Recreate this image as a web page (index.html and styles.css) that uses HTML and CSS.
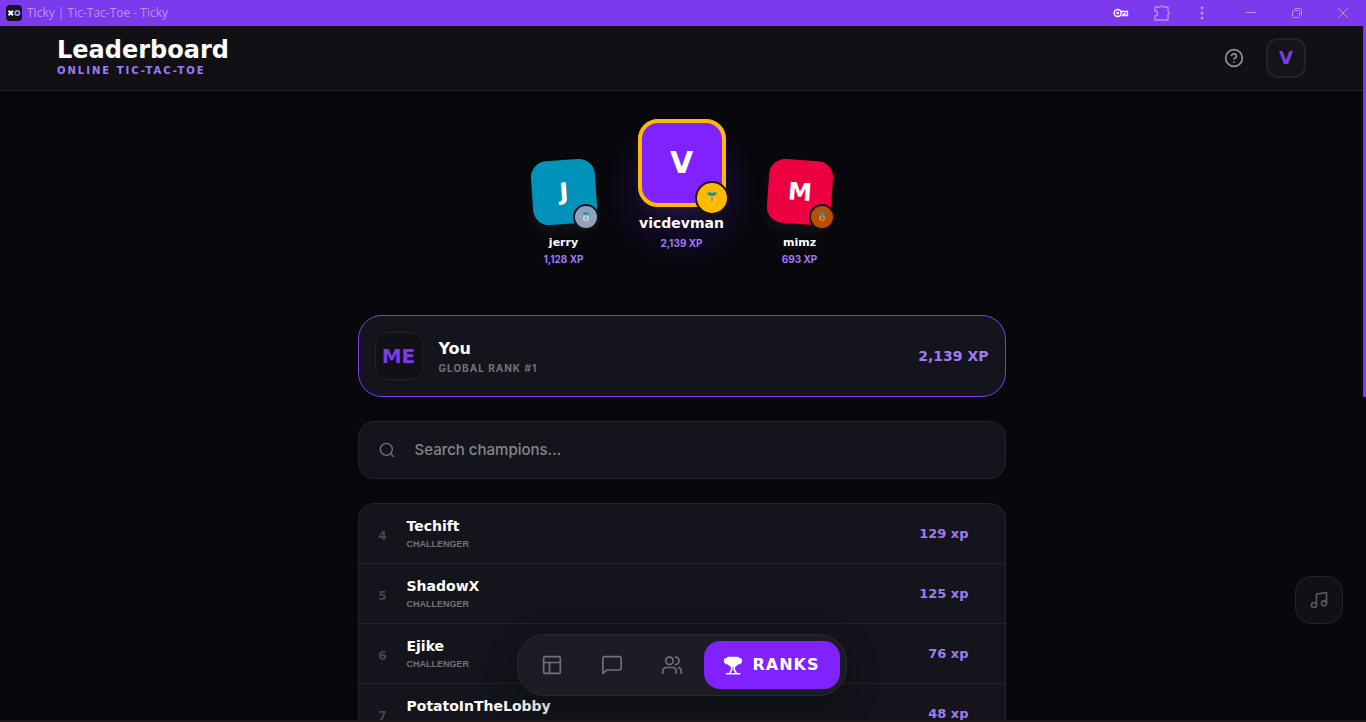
FILE: index.html
```html
<!DOCTYPE html>
<html lang="en">
<head>
<meta charset="utf-8">
<title>Ticky | Tic-Tac-Toe - Ticky</title>
<link rel="stylesheet" href="styles.css">
</head>
<body>
<div class="titlebar">
  <svg class="app-icon" viewBox="0 0 16 16"><rect width="16" height="16" rx="4" fill="#12131c"/><path d="M2.500 5.700l4.500 4.600M7 5.700l-4.500 4.600" stroke="#fff" stroke-width="2"/><circle cx="11.300" cy="8" r="2.200" fill="none" stroke="#a78bfa" stroke-width="1.800"/></svg>
  <span class="window-title">Ticky | Tic-Tac-Toe - Ticky</span>
  <div class="window-tools">
    <button class="tool" aria-label="Passwords"><svg class="key" viewBox="0 0 16 18"><circle cx="4.700" cy="9" r="3.500" fill="none" stroke="#fff" stroke-width="1.400"/><circle cx="4.700" cy="9" r="1.300" fill="#fff"/><path d="M8 7.500h6.500v4h-2.500v-1.700h-1.500v1.700h-2" fill="none" stroke="#fff" stroke-width="1.300"/></svg></button>
    <button class="tool" aria-label="Extensions"><svg viewBox="0 0 18 18"><path d="M3 3h4.200a1.700 1.700 0 0 1 3.200 0H15v4.300a1.700 1.700 0 0 1 0 3.200V16H2v-4a2.500 2.500 0 0 0 0-5V3z" fill="none" stroke="currentColor" stroke-width="1.300" stroke-linejoin="round"/></svg></button>
    <button class="tool" aria-label="Menu"><svg viewBox="0 0 18 18" fill="currentColor"><circle cx="9" cy="4" r="1.500"/><circle cx="9" cy="9" r="1.500"/><circle cx="9" cy="14" r="1.500"/></svg></button>
  </div>
  <div class="window-controls">
    <button class="tool" aria-label="Minimize"><svg viewBox="0 0 18 18"><path d="M4 8.500h10" stroke="currentColor"/></svg></button>
    <button class="tool" aria-label="Restore"><svg viewBox="0 0 18 18" fill="none" stroke="currentColor"><rect x="4.500" y="6.500" width="7" height="7" rx="1"/><path d="M6.500 4.500h5a2 2 0 0 1 2 2v5"/></svg></button>
    <button class="tool" aria-label="Close"><svg viewBox="0 0 18 18"><path d="M4 4l10 10M14 4L4 14" stroke="currentColor"/></svg></button>
  </div>
</div>
<div class="viewport">
  <header class="header">
    <div>
      <h1 class="title">Leaderboard</h1>
      <p class="subtitle">ONLINE TIC-TAC-TOE</p>
    </div>
    <div class="header-actions">
      <button class="help" aria-label="Help"><svg class="icon20" viewBox="0 0 24 24"><circle cx="12" cy="12" r="10"/><path d="M9.090 9a3 3 0 0 1 5.830 1c0 2-3 3-3 3M12 17h.010"/></svg></button>
      <button class="profile">V</button>
    </div>
  </header>
  <main class="main">
    <section class="podium">
      <div class="place">
        <div class="avatar-wrap">
          <div class="avatar teal">J</div>
          <span class="badge silver"><svg viewBox="0 0 14 14"><path d="M3 2l2.500-1L7 2.500 8.500 1 11 2 8.500 5h-3z" fill="#1199cf"/><circle cx="7" cy="8.500" r="3.500" fill="#cfd3d7"/><path d="M6 7.200h1.800v1.300H6v1.500h2" fill="none" stroke="#858d98"/></svg></span>
        </div>
        <div class="name">jerry</div>
        <div class="points">1,128 XP</div>
      </div>
      <div class="place first">
        <div class="avatar-wrap">
          <div class="avatar champion">V</div>
          <span class="badge gold"><svg viewBox="0 0 14 14"><path d="M1.500 2l4-1L7 2.200 8.500 1l4 1-3 3h-5z" fill="#1199b4"/><circle cx="7" cy="8.500" r="3.500" fill="#ffc02a"/><path d="M7 6.300v4" stroke="#9c6410" stroke-width="1.200"/></svg></span>
        </div>
        <div class="name">vicdevman</div>
        <div class="points">2,139 XP</div>
      </div>
      <div class="place third">
        <div class="avatar-wrap">
          <div class="avatar red">M</div>
          <span class="badge bronze"><svg viewBox="0 0 14 14"><path d="M3 2l2.500-1L7 2.500 8.500 1 11 2 8.500 5h-3z" fill="#1199cf"/><circle cx="7" cy="8.500" r="3.500" fill="#d98c2c"/><path d="M6 7h2L7 8.500h1V10H6" fill="none" stroke="#85450c"/></svg></span>
        </div>
        <div class="name">mimz</div>
        <div class="points">693 XP</div>
      </div>
    </section>
    <section class="me-card">
      <div class="me-avatar">ME</div>
      <div class="me-info">
        <h2 class="me-name">You</h2>
        <p class="me-rank">GLOBAL RANK #1</p>
      </div>
      <strong class="me-xp">2,139 XP</strong>
    </section>
    <label class="search">
      <svg class="icon16" viewBox="0 0 24 24"><circle cx="11" cy="11" r="9"/><path d="M22 22l-4.600-4.600"/></svg>
      <input class="search-input" type="text" placeholder="Search champions..." aria-label="Search champions">
    </label>
    <ol class="ranking">
      <li class="row"><span class="rank">4</span><div class="who"><h3 class="player">Techift</h3><p class="tier">CHALLENGER</p></div><span class="xp">129 xp</span></li>
      <li class="row"><span class="rank">5</span><div class="who"><h3 class="player">ShadowX</h3><p class="tier">CHALLENGER</p></div><span class="xp">125 xp</span></li>
      <li class="row"><span class="rank">6</span><div class="who"><h3 class="player">Ejike</h3><p class="tier">CHALLENGER</p></div><span class="xp">76 xp</span></li>
      <li class="row"><span class="rank">7</span><div class="who"><h3 class="player">PotatoInTheLobby</h3><p class="tier">CHALLENGER</p></div><span class="xp">48 xp</span></li>
    </ol>
  </main>
  <div class="scroll-thumb"></div>
  <button class="music" aria-label="Music"><svg class="icon20" viewBox="0 0 24 24"><path d="M9 18V5l12-2v13"/><circle cx="6" cy="18" r="3"/><circle cx="18" cy="16" r="3"/></svg></button>
  <nav class="dock">
    <button class="dock-item" aria-label="Board"><svg class="icon20" viewBox="0 0 24 24"><rect x="2" y="2" width="20" height="20" rx="2"/><path d="M2 9h20M9 22V9"/></svg></button>
    <button class="dock-item" aria-label="Chat"><svg class="icon20" viewBox="0 0 24 24"><path d="M23 16a2 2 0 0 1-2 2H6l-5 4V4a2 2 0 0 1 2-2h18a2 2 0 0 1 2 2z"/></svg></button>
    <button class="dock-item" aria-label="Friends"><svg class="icon20" viewBox="0 0 24 24"><path d="M17 22v-3a4 4 0 0 0-4-4H5a4 4 0 0 0-4 4v3"/><circle cx="9" cy="7" r="4.500"/><path d="M23 22v-3a4 4 0 0 0-3-3.870M16 2.500a4.500 4.500 0 0 1 0 9"/></svg></button>
    <button class="dock-item active"><svg class="icon20" viewBox="0 0 24 24"><path d="M6 2h12c1 0 1.500 1 1.500 1.500h1a3 3 0 0 1 2.500 3c0 3-2 5-5 5-1 1.500-2.500 2.500-3.500 3h-5c-1-.500-2.500-1.500-3.500-3-3 0-5-2-5-5a3 3 0 0 1 2.500-3h1C4.500 3 5 2 6 2z" fill="currentColor" stroke="none"/><path d="M10.500 14v3.500L8 22M13.500 14v3.500L16 22M4 22.500h16"/></svg><span>RANKS</span></button>
  </nav>
</div>
</body>
</html>
```

FILE: styles.css
```css
* { box-sizing: border-box; }

body {
  margin: 0;
  height: 100vh;
  display: flex;
  flex-direction: column;
  overflow: hidden;
  background: #07070c;
  color: #fff;
  font-family: Inter, "Liberation Sans", sans-serif;
  border-bottom: 2px solid #1c181a;
}

h1, h2, h3, p, ol { margin: 0; padding: 0; }
button { border: 0; padding: 0; background: none; font: inherit; color: inherit; }
svg { display: block; }

.titlebar {
  flex: none;
  height: 26px;
  display: flex;
  align-items: center;
  gap: 5px;
  padding: 0 14px 0 6px;
  background: #7c3aed;
  color: #b794f6;
}
.app-icon { width: 16px; height: 16px; }
.window-title { flex: 1; font: 12px/16px "Open Sans", "Noto Sans", sans-serif; }
.window-tools { display: flex; gap: 22px; }
.window-controls { display: flex; gap: 28px; margin-left: 26px; }
.tool svg { width: 18px; height: 18px; }
.tool .key { width: 16px; margin-right: 2px; }

.viewport {
  position: relative;
  flex: 1;
  min-height: 0;
  overflow: hidden;
  padding-right: 3px;
}

.header {
  display: flex;
  align-items: center;
  justify-content: space-between;
  height: 65px;
  margin-right: -3px;
  padding: 0 60px 0 57px;
  background: #111115;
  border-bottom: 1px solid #242428;
}
.title { font: bold 24px/22px "DejaVu Sans", sans-serif; }
.subtitle { margin-top: 4px; font: bold 10px/12px "DejaVu Sans", sans-serif; letter-spacing: 2px; color: #a07af5; }
.header-actions { display: flex; align-items: center; gap: 22px; }
.help { color: #929297; }
.profile {
  width: 40px;
  height: 40px;
  border: 2px solid #232329;
  border-radius: 12px;
  background: #14151c;
  color: #7c3aed;
  font: bold 18px/20px "DejaVu Sans", sans-serif;
}

.icon20, .icon16 { fill: none; stroke: currentColor; stroke-width: 2; stroke-linecap: round; stroke-linejoin: round; }
.icon20 { width: 20px; height: 20px; }
.icon16 { width: 16px; height: 16px; }

.main { max-width: 680px; margin: 0 auto; padding: 28px 16px 0; }

.podium { display: flex; justify-content: center; align-items: flex-end; gap: 32px; height: 148px; }
.place { position: relative; width: 86px; display: flex; flex-direction: column; align-items: center; }
.avatar-wrap { position: relative; }
.avatar {
  width: 64px;
  height: 64px;
  display: grid;
  place-items: center;
  border-radius: 16px;
  font: bold 24px/24px "DejaVu Sans", sans-serif;
  transform: rotate(-4deg);
  box-shadow: 0 8px 12px #ffffff0c;
}
.third .avatar { transform: rotate(4deg); }
.teal { background: #0092b8; }
.red { background: #ec003f; }
.first { padding-bottom: 16px; }
.first::before {
  content: "";
  position: absolute;
  width: 160px;
  height: 160px;
  top: -8px;
  border-radius: 50%;
  background: radial-gradient(circle, #1a0c3a, #0d091b 50%, #07070c 70%);
}
.first .avatar {
  width: 88px;
  height: 88px;
  border: 4px solid #ffb900;
  border-radius: 20px;
  background: #7f22fe;
  font-size: 30px;
  transform: none;
}
.badge {
  position: absolute;
  right: -3px;
  bottom: -6px;
  width: 26px;
  height: 26px;
  display: grid;
  place-items: center;
  border: 2px solid #14151c;
  border-radius: 50%;
}
.badge svg { width: 12px; height: 12px; }
.silver { background: #90a1b9; }
.bronze { background: #bb4d00; }
.gold { width: 34px; height: 34px; bottom: -8px; background: #ffb900; }
.gold svg { width: 14px; height: 14px; }
.name { position: relative; margin-top: 11px; font: bold 11px/16px "DejaVu Sans", sans-serif; }
.first .name { margin-top: 8px; font-size: 14px; }
.points { position: relative; font-size: 10px; line-height: 16px; font-weight: 700; color: #a07af5; }
.first .points { margin-top: 4px; }

.me-card {
  display: flex;
  align-items: center;
  gap: 16px;
  margin-top: 48px;
  padding: 16px;
  border: 1px solid #7c3aed;
  border-radius: 24px;
  background: #14151c;
}
.me-avatar {
  width: 48px;
  height: 48px;
  display: grid;
  place-items: center;
  border: 1px solid #232329;
  border-radius: 12px;
  background: #111115;
  color: #7c3aed;
  font: bold 20px/20px "DejaVu Sans", sans-serif;
}
.me-info { flex: 1; padding-top: 2px; }
.me-name { font: bold 16px/20px "DejaVu Sans", sans-serif; }
.me-rank { margin-top: 2px; font-size: 10px; line-height: 14px; font-weight: 700; letter-spacing: 1px; color: #717178; }
.me-xp { font: bold 14px/20px "DejaVu Sans", sans-serif; color: #a07af5; }

.search {
  display: flex;
  align-items: center;
  gap: 20px;
  height: 58px;
  margin-top: 24px;
  padding: 0 20px;
  border: 1px solid #242428;
  border-radius: 16px;
  background: #14151c;
  color: #717178;
}
.search-input { flex: 1; min-width: 0; padding: 0; border: 0; outline: 0; background: none; color: #fff; font: 500 15px/24px Inter, sans-serif; }
.search-input::placeholder { color: #85858b; }

.ranking { margin-top: 24px; list-style: none; border: 1px solid #242428; border-radius: 16px; background: #14151c; overflow: hidden; }
.row { display: flex; align-items: center; height: 60px; padding: 0 36px 0 16px; border-bottom: 1px solid #242428; }
.rank { width: 16px; margin-right: 16px; padding-top: 4px; text-align: center; font: bold 12px/16px "DejaVu Sans", sans-serif; color: #46464d; }
.who { flex: 1; }
.player { font: bold 14px/20px "DejaVu Sans", sans-serif; }
.tier { font: bold 9px/16px "Liberation Sans", sans-serif; color: #717178; }
.xp { font: bold 13px/18px "DejaVu Sans", sans-serif; color: #a07af5; }

.scroll-thumb { position: absolute; top: 0; right: 0; width: 3px; height: 53.4%; background: #7c3aed; }

.music {
  position: absolute;
  right: 23px;
  bottom: 96px;
  width: 48px;
  height: 48px;
  display: grid;
  place-items: center;
  border: 1px solid #242428;
  border-radius: 16px;
  background: #101117;
  color: #57575d;
}

.dock {
  position: absolute;
  left: 0;
  right: 3px;
  bottom: 24px;
  width: fit-content;
  margin: 0 auto;
  display: flex;
  gap: 4px;
  padding: 6px;
  border: 1px solid #2a2a32;
  border-radius: 28px;
  background: #1c1c24;
  box-shadow: 0 12px 32px #00000055;
}
.dock-item { width: 56px; height: 48px; display: flex; align-items: center; justify-content: center; gap: 9px; border-radius: 16px; color: #717178; }
.dock-item.active { width: 136px; background: #7f22fe; color: #fff; font: bold 16px/20px "DejaVu Sans", sans-serif; letter-spacing: 1px; }
```
